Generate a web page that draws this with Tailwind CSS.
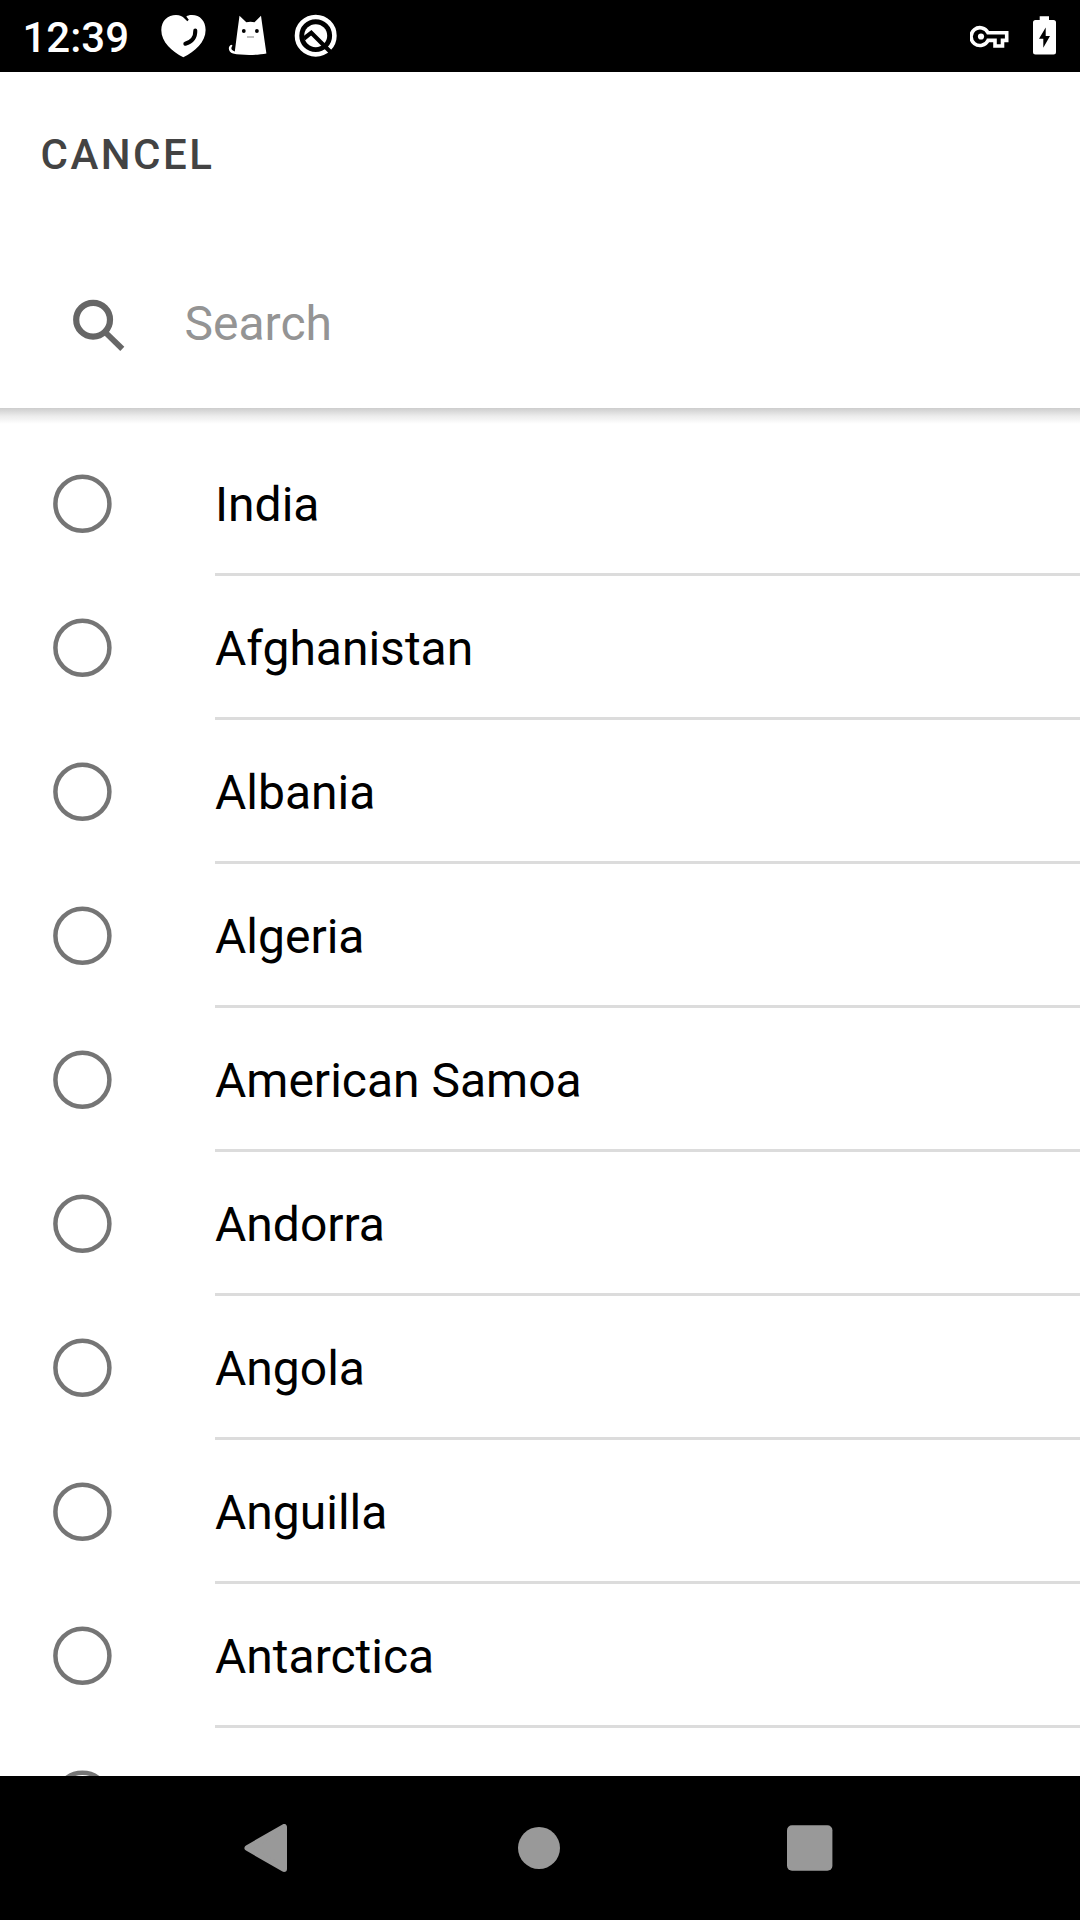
<!DOCTYPE html>
<html lang="en">
<head>
<meta charset="utf-8">
<title>Select country</title>
<script src="https://cdn.jsdelivr.net/npm/@tailwindcss/browser@4"></script>
</head>
<body class="flex h-[1920px] w-[1080px] flex-col overflow-hidden bg-white font-[Roboto,sans-serif] text-black">
  <!-- Status bar -->
  <header class="flex h-[72px] shrink-0 items-center bg-black pr-6 pl-[22.5px] text-white">
    <span class="w-[137.5px] pt-[3px] text-[42px] leading-none font-medium whitespace-nowrap">12:39</span>
    <svg class="h-[72px] w-[46px] shrink-0" viewBox="160 0 46 72" fill="none">
      <path fill="#fff" d="M183.300 57.200C172 51.500 161.300 42 161.300 30C161.300 20.500 168 15 176 15C180 15 182.500 16.500 184.500 18.500L187.300 21.300L188.800 19.800L186.300 16.500C188 15.300 190 14.800 192 15C200 15 205.600 21 205.600 30C205.600 42 195 51.500 183.300 57.200Z"/>
      <path stroke="#000" stroke-width="4" stroke-linecap="round" d="M195.300 30.500C195.500 37.500 191.500 42 185.300 43.700"/>
    </svg>
    <svg class="ml-[22px] h-[72px] w-[40px] shrink-0" viewBox="228 0 40 72" fill="none">
      <path fill="#fff" d="M239.500 15.700L246.300 22.300Q250.500 21.300 254.500 22.300L261 15.700Q262 23 263 30L266.400 53.500C258 55.300 242 55.600 233 53.500C228 52 227.500 46 231.500 44.700L232.500 45.800C230.500 48 231 50.500 234.800 51.500L237.300 32Z"/>
      <circle cx="243.800" cy="31" r="1.900" fill="#000"/><circle cx="256.900" cy="31" r="1.900" fill="#000"/>
      <path stroke="#aaa" stroke-width="1.500" d="M247 37H254"/>
    </svg>
    <svg class="ml-[26px] h-[72px] w-[44px] shrink-0" viewBox="294 0 44 72" fill="none">
      <circle cx="315.700" cy="35.700" r="18.700" stroke="#fff" stroke-width="4.600"/>
      <circle cx="315.700" cy="35.700" r="11.500" fill="#fff"/>
      <path stroke="#000" stroke-width="4.200" d="M304 38.500L311.300 32.700L331 52.500"/>
    </svg>
    <svg class="ml-auto h-[72px] w-[40px] shrink-0" viewBox="970 0 40 72" fill="none" stroke="#fff" stroke-width="3.600">
      <path d="M988 32.800H1006.700V40.400H1002.500V46H995V40.400H988A8.900 8.900 0 1 1 988 32.800Z"/>
      <circle cx="981" cy="36.500" r="3.100" fill="#fff" stroke="none"/>
    </svg>
    <svg class="ml-[22px] h-[72px] w-6 shrink-0" viewBox="1032 0 24 72">
      <path fill="#fff" d="M1039.700 16.300H1049V20H1053.500Q1056 20 1056 22.500V52Q1056 54.500 1053.500 54.500H1035.500Q1033 54.500 1033 52V22.500Q1033 20 1035.500 20H1039.700Z"/>
      <path fill="#000" d="M1045.700 27.500L1039 38.700H1043.300V47.700L1050 36H1045.700Z"/>
    </svg>
  </header>

  <!-- Toolbar and search field -->
  <section class="relative z-10 h-[336px] shrink-0 bg-white">
    <div class="flex h-[168px] items-center pb-[3px] pl-[40.5px]">
      <button class="text-[42px] leading-none font-medium tracking-[2.5px] text-[#434343]">CANCEL</button>
    </div>
    <div class="flex h-[168px] items-center pl-[72px]">
      <svg class="h-[54px] w-[54px]" viewBox="72 297 54 54" fill="none" stroke="#666">
        <circle cx="93.100" cy="319.700" r="16.900" stroke-width="6.200"/>
        <path stroke-width="5.800" d="M105 332L122.300 348.800"/>
      </svg>
      <span class="pl-[58.5px] text-[48px] leading-none text-[#949494]">Search</span>
    </div>
    <div class="absolute top-full h-4 w-full bg-linear-to-b from-[#cdcdcd] via-[#ececec] to-white"></div>
  </section>

  <!-- Country list -->
  <main class="min-h-0 flex-1 overflow-hidden pt-6">
    <ul id="countries"></ul>
  </main>

  <!-- Navigation bar -->
  <nav class="flex h-36 shrink-0 items-center justify-between bg-black pr-[247px] pl-[243px]">
    <svg class="h-12 w-[46px]" viewBox="243 1824 46 48"><path fill="#999" stroke="#999" stroke-width="6" stroke-linejoin="round" d="M284 1827V1869L247.500 1848Z"/></svg>
    <div class="ml-[1px] size-[42px] rounded-full bg-[#999]"></div>
    <svg class="size-[46px]" viewBox="0 0 46 46"><rect x="0" y="0.300" width="45.400" height="45.400" rx="5" fill="#999"/></svg>
  </nav>

  <script>
    const countries = ["India", "Afghanistan", "Albania", "Algeria", "American Samoa", "Andorra", "Angola", "Anguilla", "Antarctica", ""];
    document.getElementById("countries").innerHTML = countries.map(name => `
      <li class="flex h-36">
        <div class="w-[215px] shrink-0 pt-[42px] pl-[53px]">
          <svg class="size-[60px]" viewBox="53 42 60 60" fill="none"><circle cx="82.400" cy="71.800" r="27" stroke="#757575" stroke-width="4.500"/></svg>
        </div>
        <div class="flex flex-1 items-center border-b-3 border-[#dcdcdc] pt-[5px] text-[48px] leading-none">${name}</div>
      </li>`).join("");
  </script>
</body>
</html>
